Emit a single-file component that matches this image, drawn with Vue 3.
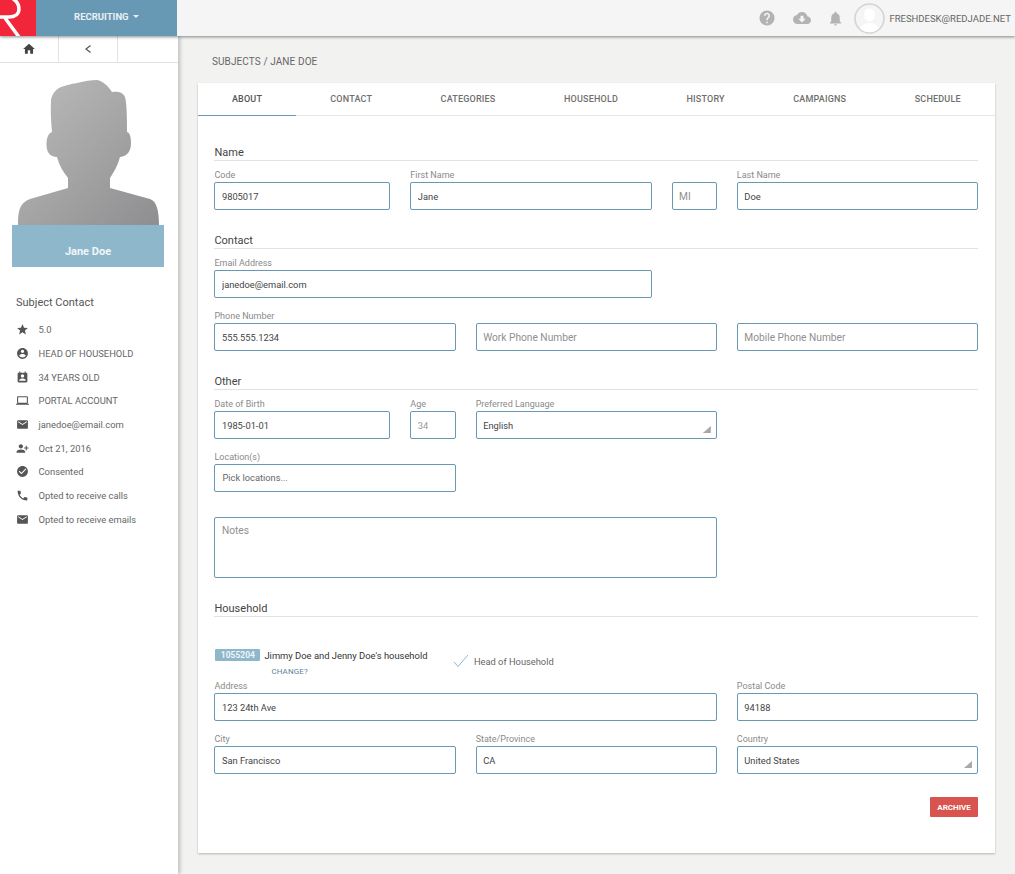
<script setup>
const paths = {
  star: 'M12 17.27L18.18 21l-1.64-7.03L22 9.24l-7.19-.61L12 2 9.19 8.63 2 9.24l5.46 4.73L5.82 21z',
  account: 'M12 2C6.48 2 2 6.48 2 12s4.48 10 10 10 10-4.48 10-10S17.52 2 12 2zm0 3c1.66 0 3 1.34 3 3s-1.34 3-3 3-3-1.34-3-3 1.34-3 3-3zm0 14.2c-2.5 0-4.71-1.28-6-3.22.03-1.99 4-3.08 6-3.08 1.99 0 5.97 1.09 6 3.08-1.29 1.94-3.5 3.22-6 3.22z',
  calendar: 'M19 3h-1V1h-2v2H8V1H6v2H5c-1.11 0-2 .9-2 2v14c0 1.1.89 2 2 2h14c1.1 0 2-.9 2-2V5c0-1.1-.9-2-2-2zm-7 3c1.66 0 3 1.34 3 3s-1.34 3-3 3-3-1.34-3-3 1.34-3 3-3zm6 12H6v-1c0-2 4-3.1 6-3.1s6 1.1 6 3.1v1z',
  laptop: 'M20 18c1.1 0 1.99-.9 1.99-2L22 6c0-1.1-.9-2-2-2H4c-1.1 0-2 .9-2 2v10c0 1.1.9 2 2 2H0v2h24v-2h-4zM4 6h16v10H4V6z',
  email: 'M20 4H4c-1.1 0-1.99.9-1.99 2L2 18c0 1.1.9 2 2 2h16c1.1 0 2-.9 2-2V6c0-1.1-.9-2-2-2zm0 4l-8 5-8-5V6l8 5 8-5v2z',
  add: 'M9 12c2.21 0 4-1.79 4-4s-1.79-4-4-4-4 1.79-4 4 1.79 4 4 4zm9-2V7h2v3h3v2h-3v3h-2v-3h-3v-2h3zM9 14c-2.67 0-8 1.34-8 4v2h16v-2c0-2.66-5.33-4-8-4z',
  check: 'M12 2C6.48 2 2 6.48 2 12s4.48 10 10 10 10-4.48 10-10S17.52 2 12 2zm-2 15l-5-5 1.41-1.41L10 14.17l7.59-7.59L19 8l-9 9z',
  phone: 'M6.62 10.79c1.44 2.83 3.76 5.14 6.59 6.59l2.2-2.2c.27-.27.67-.36 1.02-.24 1.12.37 2.33.57 3.57.57.55 0 1 .45 1 1V20c0 .55-.45 1-1 1-9.39 0-17-7.61-17-17 0-.55.45-1 1-1h3.5c.55 0 1 .45 1 1 0 1.25.2 2.45.57 3.57.11.35.03.74-.25 1.02l-2.2 2.2z',
}
const contact = [
  ['star', '5.0'],
  ['account', 'HEAD OF HOUSEHOLD'],
  ['calendar', '34 YEARS OLD'],
  ['laptop', 'PORTAL ACCOUNT'],
  ['email', 'janedoe@email.com'],
  ['add', 'Oct 21, 2016'],
  ['check', 'Consented'],
  ['phone', 'Opted to receive calls'],
  ['email', 'Opted to receive emails'],
]
const tabs = ['ABOUT', 'CONTACT', 'CATEGORIES', 'HOUSEHOLD', 'HISTORY', 'CAMPAIGNS', 'SCHEDULE']
</script>

<template>
  <div class="app">
    <header class="topbar">
      <div class="logo">
        <svg width="36" height="36" viewBox="0 0 36 36">
          <path d="M-4 17H9C15 17 19 14 19 9C19 5 17 1 12 -2M5 18L19 37" fill="none" stroke="#fff" stroke-width="3.500" />
        </svg>
      </div>
      <div class="module">RECRUITING <span class="caret"></span></div>
      <div class="top-actions">
        <svg class="ti help" viewBox="0 0 24 24"><path d="M12 2C6.48 2 2 6.48 2 12s4.48 10 10 10 10-4.48 10-10S17.52 2 12 2zm1 17h-2v-2h2v2zm2.07-7.75l-.9.92C13.45 12.9 13 13.5 13 15h-2v-.5c0-1.1.45-2.1 1.17-2.83l1.24-1.26c.37-.36.59-.86.59-1.41 0-1.1-.9-2-2-2s-2 .9-2 2H8c0-2.21 1.79-4 4-4s4 1.79 4 4c0 .88-.36 1.68-.93 2.25z" /></svg>
        <svg class="ti cloud" viewBox="0 0 24 24"><path d="M19.35 10.04C18.67 6.59 15.64 4 12 4 9.11 4 6.6 5.64 5.35 8.04 2.34 8.36 0 10.91 0 14c0 3.31 2.69 6 6 6h13c2.76 0 5-2.24 5-5 0-2.64-2.05-4.78-4.65-4.96zM17 13l-5 5-5-5h3V9h4v4h3z" /></svg>
        <svg class="ti bell" viewBox="0 0 24 24"><path d="M12 22c1.1 0 2-.9 2-2h-4c0 1.1.89 2 2 2zm6-6v-5c0-3.07-1.64-5.64-4.5-6.32V4c0-.83-.67-1.5-1.5-1.5s-1.5.67-1.5 1.5v.68C7.63 5.36 6 7.92 6 11v5l-2 2v1h16v-1l-2-2z" /></svg>
        <svg class="avatar" viewBox="0 0 31 31">
          <circle cx="15.5" cy="15.5" r="14.5" fill="#f5f5f5" stroke="#d4d4d4" stroke-width="1.6" />
          <clipPath id="avatar-clip"><circle cx="15.5" cy="15.5" r="13.7" /></clipPath>
          <g clip-path="url(#avatar-clip)" fill="#fff">
            <ellipse cx="15.5" cy="12" rx="5.4" ry="6.6" />
            <path d="M4 31C5 23 10 20 15.5 20S26 23 27 31z" />
          </g>
        </svg>
        <span class="user">FRESHDESK@REDJADE.NET</span>
      </div>
    </header>

    <div class="body">
      <aside class="sidebar">
        <nav class="subnav">
          <div class="subcell">
            <svg class="home" viewBox="0 0 24 24"><path d="M10 20v-6h4v6h5v-8h3L12 3 2 12h3v8z" /></svg>
          </div>
          <div class="subcell">
            <svg class="chev" viewBox="0 0 10 12"><path d="M7.500 2.500L3 6L7.500 9.500" fill="none" stroke="#555" stroke-width="1.2" /></svg>
          </div>
          <div class="subcell"></div>
        </nav>

        <div class="portrait">
          <svg class="silhouette" width="152" height="146" viewBox="12 80 152 146">
            <defs>
              <linearGradient id="sil" x1="0" y1="0" x2="1" y2="1">
                <stop offset="0" stop-color="#bcbcbc" />
                <stop offset="1" stop-color="#8e8e90" />
              </linearGradient>
            </defs>
            <path fill="url(#sil)" d="M18 225C18 212 19 203 30 199L68 188V178C63 172 59 165 57 157C50 157 46 152 46.500 143C47 136 49 133 52 132C51 122 50.500 112 51 100C52 94 56 89 61 87C68 85 70 84 77 83C85 81 91 80 97 80C103 81 108 86 112 92C118 91 123 92 125 97C127 104 127 120 127 132C130 133 131 137 131 143C131 152 127 156 120 157C118 165 114 172 110 178V188L150 199C157 201 159 212 159 225Z" />
          </svg>
          <div class="namebar">Jane Doe</div>
        </div>

        <h3 class="sc-title">Subject Contact</h3>
        <ul class="sc-list">
          <li v-for="(c, i) in contact" :key="i">
            <svg class="sc-icon" viewBox="0 0 24 24"><path :d="paths[c[0]]" /></svg>
            <span>{{ c[1] }}</span>
          </li>
        </ul>
      </aside>

      <main class="main">
        <div class="crumb">SUBJECTS / JANE DOE</div>
        <section class="card">
          <div class="tabs">
            <div v-for="(t, i) in tabs" :key="t" class="tab" :class="{ active: i === 0 }">{{ t }}</div>
          </div>
          <div class="form">
            <h4 class="sec first">Name</h4>
            <div class="row">
              <div class="f c3"><label>Code</label><input value="9805017" /></div>
              <div class="f c4"><label>First Name</label><input value="Jane" /></div>
              <div class="f c1"><label>&nbsp;</label><input placeholder="MI" /></div>
              <div class="f c4"><label>Last Name</label><input value="Doe" /></div>
            </div>

            <h4 class="sec">Contact</h4>
            <div class="row">
              <div class="f c7"><label>Email Address</label><input value="janedoe@email.com" /></div>
            </div>
            <div class="row next">
              <div class="f c4"><label>Phone Number</label><input value="555.555.1234" /></div>
              <div class="f c4"><label>&nbsp;</label><input placeholder="Work Phone Number" /></div>
              <div class="f c4"><label>&nbsp;</label><input placeholder="Mobile Phone Number" /></div>
            </div>

            <h4 class="sec">Other</h4>
            <div class="row">
              <div class="f c3"><label>Date of Birth</label><input value="1985-01-01" /></div>
              <div class="f c1"><label>Age</label><input class="dim" value="34" /></div>
              <div class="f c4 sel"><label>Preferred Language</label><input value="English" /><i class="grip"></i></div>
            </div>
            <div class="row next">
              <div class="f c4"><label>Location(s)</label><input class="pad8" placeholder="Pick locations..." /></div>
            </div>
            <div class="row next">
              <div class="f c8"><label>&nbsp;</label><textarea placeholder="Notes"></textarea></div>
            </div>

            <h4 class="sec">Household</h4>
            <div class="hh">
              <div class="hh-info">
                <div class="hh-line"><span class="badge">1055204</span><span class="hh-name">Jimmy Doe and Jenny Doe's household</span></div>
                <div class="change">CHANGE?</div>
              </div>
              <div class="hoh">
                <svg width="16" height="14" viewBox="0 0 16 14"><path d="M1 8L5 12.500L15 1" fill="none" stroke="#8fb8cb" stroke-width="1" /></svg>
                <span>Head of Household</span>
              </div>
            </div>
            <div class="row tight">
              <div class="f c8"><label>Address</label><input value="123 24th Ave" /></div>
              <div class="f c4"><label>Postal Code</label><input value="94188" /></div>
            </div>
            <div class="row next">
              <div class="f c4"><label>City</label><input value="San Francisco" /></div>
              <div class="f c4"><label>State/Province</label><input value="CA" /></div>
              <div class="f c4 sel"><label>Country</label><input value="United States" /><i class="grip"></i></div>
            </div>

            <div class="actions"><button type="button" class="archive">ARCHIVE</button></div>
          </div>
        </section>
      </main>
    </div>
  </div>
</template>

<style>
html, body { margin: 0; background: #f2f2f1; }
</style>

<style scoped>
* { box-sizing: border-box; }
.app {
  width: 1015px;
  height: 874px;
  overflow: hidden;
  display: flex;
  flex-direction: column;
  font-family: Roboto, "Liberation Sans", sans-serif;
  color: #555;
  background: #f2f2f1;
}
.topbar {
  height: 36px;
  flex: none;
  display: flex;
  background: #f5f5f5;
  box-shadow: 0 1px 3px rgba(0, 0, 0, .45);
  position: relative;
  z-index: 3;
}
.logo { width: 36px; height: 36px; background: #f1263a; overflow: hidden; }
.logo svg { display: block; }
.module {
  width: 141px;
  background: #6899b4;
  color: #e8f0f4;
  font-size: 9.500px;
  font-weight: 700;
  line-height: 33px;
  text-align: center;
}
.caret {
  display: inline-block;
  border: 3px solid transparent;
  border-top-color: #e8f0f4;
  border-bottom: 0;
  margin-left: 2px;
  vertical-align: 2px;
}
.top-actions { flex: 1; display: flex; align-items: center; justify-content: flex-end; padding-right: 4px; }
.ti { fill: #b3b3b3; display: block; }
.help { width: 18px; height: 18px; margin-right: 17px; }
.cloud { width: 18px; height: 18px; margin-right: 16px; }
.bell { width: 17px; height: 17px; margin-right: 10px; }
.avatar { width: 31px; height: 31px; margin-right: 4px; }
.user { font-size: 9.500px; color: #666; }

.body { flex: 1; display: flex; min-height: 0; }
.sidebar {
  width: 178px;
  flex: none;
  background: #fff;
  box-shadow: 2px 0 4px rgba(0, 0, 0, .22);
  position: relative;
  z-index: 2;
}
.subnav { height: 27px; display: flex; border-bottom: 1px solid #e2e2e2; }
.subcell {
  width: 59px;
  display: flex;
  align-items: center;
  justify-content: center;
  border-right: 1px solid #e2e2e2;
}
.subcell:last-child { border-right: 0; }
.home { width: 14px; height: 14px; fill: #444; }
.chev { width: 10px; height: 12px; }
.portrait { padding: 17px 14px 0 12px; }
.silhouette { display: block; }
.namebar {
  width: 152px;
  height: 42px;
  margin-top: -1px;
  background: #8fb7cb;
  color: #f1f6f8;
  font-size: 11px;
  font-weight: 700;
  line-height: 54px;
  text-align: center;
  overflow: hidden;
}
.sc-title { margin: 28px 0 0 16px; font-size: 11px; line-height: 16px; font-weight: 400; color: #555; }
.sc-list { list-style: none; margin: 7px 0 0 16px; padding: 0; }
.sc-list li {
  height: 23.700px;
  display: flex;
  align-items: center;
  font-size: 9.400px;
  color: #666;
}
.sc-icon { width: 13px; height: 13px; fill: #555; flex: none; margin-right: 10px; margin-left: -.5px; }

.main { flex: 1; min-width: 0; padding: 0 20px 0 20px; }
.crumb { height: 47px; padding: 20px 0 0 14px; font-size: 10px; line-height: 12px; letter-spacing: .1px; color: #666; }
.card { width: 797px; height: 770px; background: #fff; box-shadow: 0 1px 2px rgba(0, 0, 0, .25); }
.tabs { display: flex; height: 33px; border-bottom: 1px solid #e8e8e8; }
.tab {
  flex: 1 1 auto;
  padding: 0 33px;
  text-align: center;
  font-size: 9px;
  font-weight: 500;
  letter-spacing: .2px;
  line-height: 33px;
  color: #706f6c;
  height: 33px;
}
.tab.active { flex: 0 0 98px; padding: 0; color: #555; box-shadow: inset 0 -1px 0 #6899b4; }
.form { padding: 28px 17px 0 16.450px; }
.sec {
  margin: 22px 0 0;
  height: 17px;
  font-size: 11px;
  font-weight: 400;
  line-height: 18px;
  color: #444;
  border-bottom: 1px solid #e2e2e2;
}
.sec.first { margin-top: 0; }
.row { display: grid; grid-template-columns: repeat(12, 1fr); column-gap: 20px; margin-top: 6px; }
.row.next { margin-top: 10px; }
.row.tight { margin-top: 0; }
.f { min-width: 0; position: relative; }
.c1 { grid-column: span 1; }
.c3 { grid-column: span 3; }
.c4 { grid-column: span 4; }
.c7 { grid-column: span 7; }
.c8 { grid-column: span 8; }
label { display: block; height: 14px; margin-bottom: 1px; font-size: 9px; line-height: 16px; color: #8a8a8a; }
input, textarea {
  display: block;
  width: 100%;
  height: 28px;
  padding: 0 6px 0 6.500px;
  margin: 0;
  border: 1px solid #6899b4;
  border-radius: 2px;
  background: #fff;
  outline: 0;
  font-family: inherit;
  font-size: 9.300px;
  color: #444;
}
input::placeholder, textarea::placeholder { color: #8f8f8f; opacity: 1; font-size: 10.200px; }
textarea { height: 61px; resize: none; padding-top: 6px; line-height: 13px; }
.dim { color: #999; }
.pad8 { padding-left: 7px; padding-bottom: 2px; }
.pad8::placeholder { font-size: 9.300px; color: #666; }
.grip {
  position: absolute;
  right: 6px;
  bottom: 6px;
  width: 8px;
  height: 7px;
  background: #a9a9a9;
  clip-path: polygon(100% 0, 100% 100%, 0 100%);
}
.hh { height: 61px; padding-top: 32px; display: flex; position: relative; }
.hh-info { width: 237.500px; margin-left: 1px; }
.hh-line { display: flex; align-items: center; height: 12px; }
.badge {
  width: 45px;
  height: 12px;
  background: #8fb7cb;
  color: #eef4f7;
  font-size: 8.500px;
  font-weight: 700;
  line-height: 12px;
  text-align: center;
  border-radius: 1px;
  margin-right: 4px;
}
.hh-name { font-size: 9.400px; color: #333; white-space: nowrap; }
.change { margin: 5px 0 0 56px; font-size: 8px; line-height: 11px; color: #5f8499; letter-spacing: .1px; }
.hoh { display: flex; align-items: center; height: 14px; margin-top: 5px; font-size: 9.300px; color: #666; }
.hoh svg { margin-right: 5px; flex: none; }
.actions { display: flex; justify-content: flex-end; margin-top: 23px; }
.archive {
  width: 48px;
  height: 20px;
  padding: 0;
  border: 0;
  border-radius: 1px;
  background: #d9534f;
  color: #fff;
  font-family: inherit;
  font-size: 8px;
  font-weight: 700;
}
</style>
